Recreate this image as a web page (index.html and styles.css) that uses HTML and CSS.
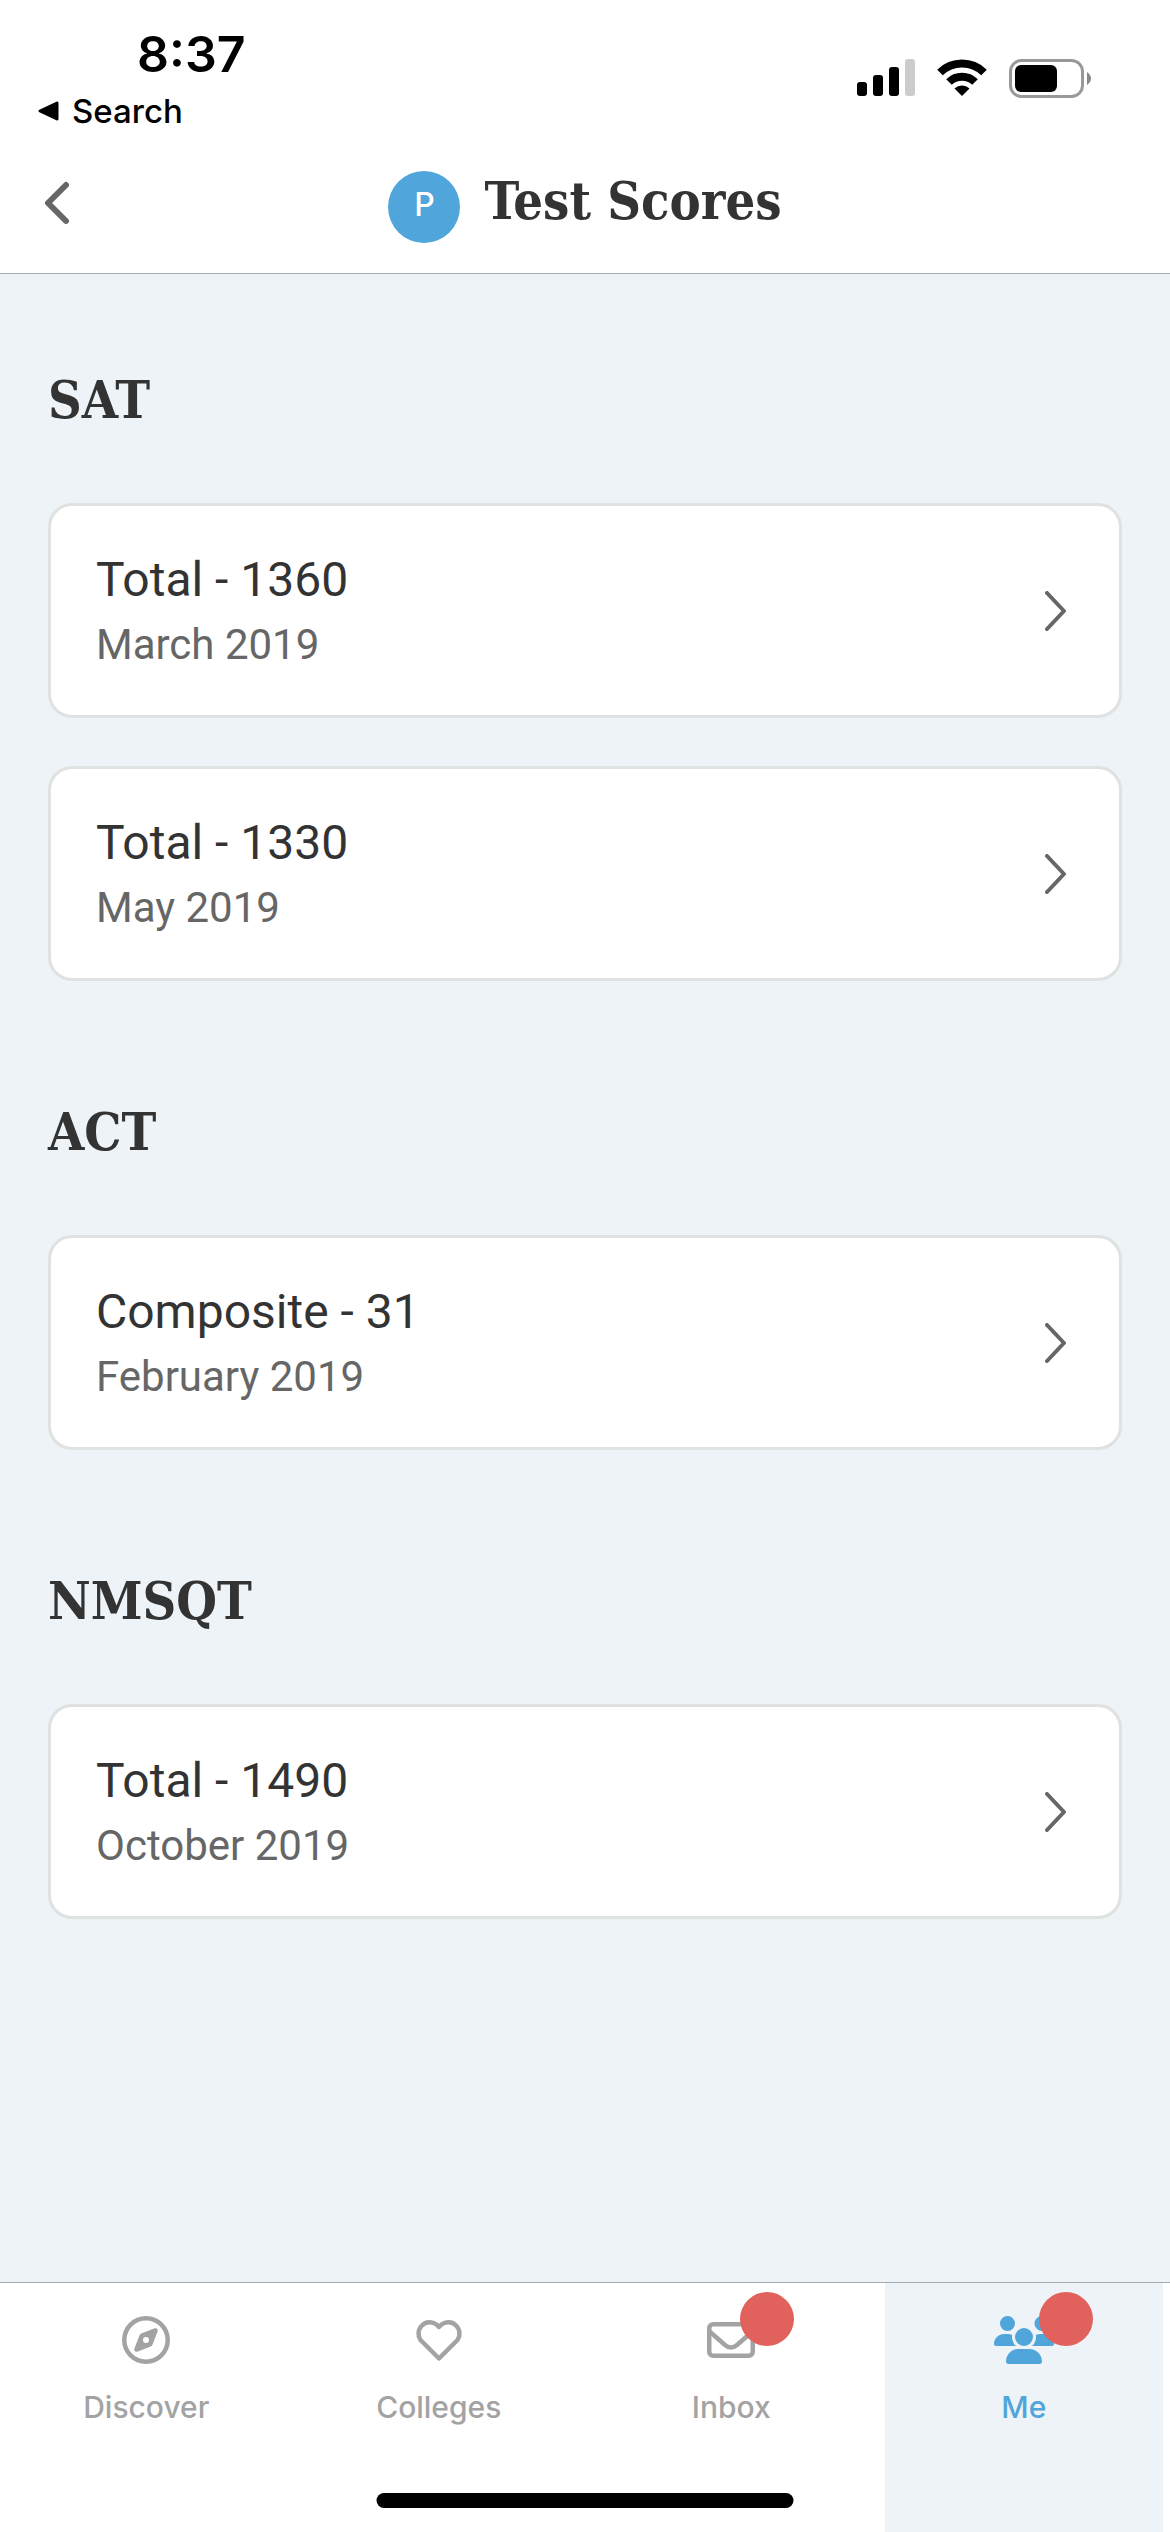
FILE: index.html
```html
<!DOCTYPE html>
<html lang="en">
<head>
<meta charset="utf-8">
<meta name="viewport" content="width=device-width, initial-scale=1">
<title>Test Scores</title>
<link rel="stylesheet" href="styles.css">
</head>
<body>
<div class="app">
  <div class="status">
    <div class="status-left">
      <div class="time">8:37</div>
      <a class="return" href="#">
        <svg width="22" height="22" viewBox="0 0 22 22" aria-hidden="true"><path d="M2 11 19 3V19Z" fill="#000" stroke="#000" stroke-width="3" stroke-linejoin="round"/></svg>
        Search
      </a>
    </div>
    <div class="status-right">
      <svg width="58" height="38" viewBox="0 0 58 38" aria-hidden="true">
        <rect x="0" y="23" width="10" height="14" rx="3"/><rect x="16" y="16" width="10" height="21" rx="3"/><rect x="32" y="8" width="10" height="29" rx="3"/><rect x="48" y="0" width="10" height="37" rx="3" fill="#ccc"/>
      </svg>
      <svg width="50" height="38" viewBox="0 0 50 38" aria-hidden="true">
        <g fill="none" stroke="#000" stroke-width="8"><path d="M3 13.500A31.500 31.500 0 0 1 47 13.500"/><path d="M12 23A18.500 18.500 0 0 1 38 23"/></g><path d="M25 37 17.500 29.500A11 11 0 0 1 32.500 29.500Z"/>
      </svg>
      <svg width="82" height="40" viewBox="0 0 82 40" aria-hidden="true">
        <rect x="1.500" y="1.500" width="72" height="36" rx="11" fill="none" stroke="#999" stroke-width="3"/><rect x="6" y="6" width="42" height="27" rx="6"/><path d="M78 13Q82 16 82 19.500T78 26Z" fill="#888"/>
      </svg>
    </div>
  </div>
  <header class="header">
    <button class="back" aria-label="Back"><svg width="26" height="44" viewBox="0 0 26 44" aria-hidden="true"><path d="M22 4 4 22 22 40" fill="none" stroke="#666" stroke-width="6" stroke-linecap="round" stroke-linejoin="round"/></svg></button>
    <span class="avatar">P</span>
    <h1 class="title">Test Scores</h1>
  </header>
  <main class="content">
    <section class="group">
      <h2 class="group-title">SAT</h2>
      <a class="card" href="#"><span class="card-text"><span class="score">Total - 1360</span><span class="date">March 2019</span></span><svg class="chevron" viewBox="0 0 22 40" aria-hidden="true"><path d="M2 2 19 20 2 38"/></svg></a>
      <a class="card" href="#"><span class="card-text"><span class="score">Total - 1330</span><span class="date">May 2019</span></span><svg class="chevron" viewBox="0 0 22 40" aria-hidden="true"><path d="M2 2 19 20 2 38"/></svg></a>
    </section>
    <section class="group">
      <h2 class="group-title">ACT</h2>
      <a class="card" href="#"><span class="card-text"><span class="score">Composite - 31</span><span class="date">February 2019</span></span><svg class="chevron" viewBox="0 0 22 40" aria-hidden="true"><path d="M2 2 19 20 2 38"/></svg></a>
    </section>
    <section class="group">
      <h2 class="group-title">NMSQT</h2>
      <a class="card" href="#"><span class="card-text"><span class="score">Total - 1490</span><span class="date">October 2019</span></span><svg class="chevron" viewBox="0 0 22 40" aria-hidden="true"><path d="M2 2 19 20 2 38"/></svg></a>
    </section>
  </main>
  <nav class="tabs">
    <a class="tab" href="#"><span class="tab-icon"><svg width="48" height="48" viewBox="0 0 512 512" aria-hidden="true"><path fill="currentColor" d="M464 256A208 208 0 1 0 48 256a208 208 0 1 0 416 0zM0 256a256 256 0 1 1 512 0A256 256 0 1 1 0 256zm306.700 69.100L162.400 380.600c-19.400 7.500-38.500-11.600-31-31l55.500-144.300c3.300-8.500 9.900-15.100 18.400-18.400l144.300-55.500c19.400-7.500 38.500 11.600 31 31L325.100 306.700c-3.200 8.500-9.900 15.100-18.400 18.400zM288 256a32 32 0 1 0 -64 0 32 32 0 1 0 64 0z"/></svg></span>Discover</a>
    <a class="tab" href="#"><span class="tab-icon"><svg width="48" height="48" viewBox="0 0 48 48" aria-hidden="true"><path fill="none" stroke="currentColor" stroke-width="4.500" stroke-linejoin="round" d="M24 42.500 5.500 24A11.300 11.300 0 0 1 21.500 8.500L24 11 26.500 8.500A11.300 11.300 0 0 1 42.500 24Z"/></svg></span>Colleges</a>
    <a class="tab" href="#"><span class="tab-icon"><svg width="48" height="48" viewBox="0 0 48 48" aria-hidden="true"><g fill="none" stroke="currentColor" stroke-width="4.500"><rect x="2.250" y="8.250" width="43.500" height="31.500" rx="4"/><path d="M2 15 18 29Q24 34 30 29L46 15"/></g></svg><span class="badge"></span></span>Inbox</a>
    <a class="tab active" href="#"><span class="tab-icon"><svg width="60" height="48" viewBox="0 0 640 512" aria-hidden="true"><path fill="currentColor" d="M144 0a80 80 0 1 1 0 160A80 80 0 1 1 144 0zM512 0a80 80 0 1 1 0 160A80 80 0 1 1 512 0zM0 298.700C0 239.800 47.800 192 106.700 192h42.700c15.900 0 31 3.500 44.600 9.700c-1.300 7.200-1.900 14.700-1.900 22.300c0 38.200 16.800 72.500 43.300 96H21.300C9.600 320 0 310.400 0 298.700zM405.300 320c26.600-23.500 43.300-57.800 43.300-96c0-7.600-.7-15-1.900-22.300c13.600-6.300 28.700-9.700 44.600-9.700h42.700C592.200 192 640 239.800 640 298.700c0 11.800-9.600 21.300-21.300 21.300H405.300zM224 224a96 96 0 1 1 192 0 96 96 0 1 1 -192 0zM128 485.300C128 411.700 187.700 352 261.300 352H378.700C452.300 352 512 411.700 512 485.300c0 14.700-11.900 26.700-26.700 26.700H154.700c-14.700 0-26.700-11.900-26.700-26.700z"/></svg><span class="badge"></span></span>Me</a>
    <span class="home-indicator"></span>
  </nav>
</div>
</body>
</html>
```
FILE: styles.css
```css
* { box-sizing: border-box; }
body { margin: 0; background: #edf3f6; color: #333; font-family: Roboto, sans-serif; }
a { color: inherit; text-decoration: none; }
svg { display: block; flex: none; }
.app { min-height: 100vh; display: flex; flex-direction: column; }
.status { display: flex; justify-content: space-between; align-items: flex-start; height: 144px; padding: 24px 79px 0 38px; background: #fff; color: #000; font-family: Inter, sans-serif; }
.time { padding-left: 99px; font-size: 50px; line-height: 60px; font-weight: 600; }
.return { display: flex; align-items: center; gap: 12px; font-size: 33px; line-height: 54px; font-weight: 500; }
.status-right { display: flex; gap: 22px; padding-top: 35px; }
.header { display: flex; justify-content: center; align-items: flex-start; gap: 24px; height: 130px; padding: 27px 48px 0; position: relative; background: #fff; border-bottom: 1px solid #a7abad; }
.back { position: absolute; left: 32px; top: 37px; padding: 0 12px; border: 0; background: none; }
.avatar { width: 72px; height: 72px; border-radius: 50%; background: #50a5da; color: #fff; font: 500 32px/68px Inter, sans-serif; text-align: center; }
.title, .group-title { margin: 0; font-family: "Roboto Slab", "DejaVu Serif Condensed", "DejaVu Serif", serif; font-size: 52px; line-height: 60px; font-weight: 700; }
.content { flex: 1; padding: 0 48px 48px; }
.group { display: flex; flex-direction: column; gap: 48px; padding-top: 96px; }
.group + .group { padding-top: 121px; }
.group-title { margin-bottom: 25px; }
.card { display: flex; justify-content: space-between; align-items: center; padding: 40px 52px 39px 45px; border: 3px solid #e0e1e1; border-radius: 24px; background: #fff; }
.card-text { display: flex; flex-direction: column; }
.score { font-size: 48px; line-height: 68px; }
.date { font-size: 42px; line-height: 62px; color: #666; }
.chevron { width: 22px; height: 40px; fill: none; stroke: #666; stroke-width: 4; stroke-linecap: round; stroke-linejoin: round; }
.tabs { display: flex; position: relative; height: 250px; border-top: 1px solid #a7abad; background: #fff; }
.tab { flex: 1; display: flex; flex-direction: column; align-items: center; gap: 25px; margin: 0 7px; padding-top: 33px; color: #a3a3a3; font: 500 30px/36px Inter, sans-serif; }
.active { background: #edf3f6; color: #50a5da; }
.tab-icon { position: relative; }
.badge { position: absolute; left: calc(100% - 15px); top: -24px; width: 54px; height: 54px; border-radius: 50%; background: #e1625d; }
.home-indicator { position: absolute; left: 50%; bottom: 24px; width: 417px; height: 15px; transform: translateX(-50%); border-radius: 8px; background: #000; }
```
